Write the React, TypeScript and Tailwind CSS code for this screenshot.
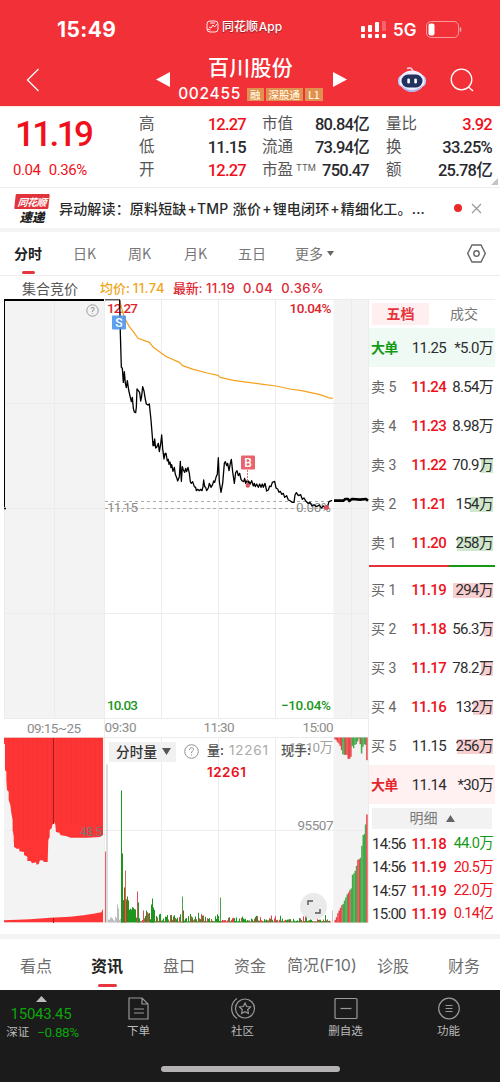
import clsx from 'clsx'
import type { ReactNode } from 'react'

type Point = [number, number]
type Bar = [x: number, height: number, color: string]
type OrderRow = { label: string; price: string; volume: string; bar: number; up?: boolean; big?: boolean }

const GREEN = '#1c961c'

const NUM = "font-[Roboto,'Noto_Sans_CJK_SC',sans-serif]"

const quoteRows = [
  ['高', '12.27', '市值', '80.84亿', '量比', '3.92'],
  ['低', '11.15', '流通', '73.94亿', '换', '33.25%'],
  ['开', '12.27', '市盈', '750.47', '额', '25.78亿'],
]

const sells: OrderRow[] = [
  { label: '大单', price: '11.25', volume: '*5.0万', bar: 0, big: true },
  { label: '卖 5', price: '11.24', volume: '8.54万', bar: 0, up: true },
  { label: '卖 4', price: '11.23', volume: '8.98万', bar: 0, up: true },
  { label: '卖 3', price: '11.22', volume: '70.9万', bar: 12, up: true },
  { label: '卖 2', price: '11.21', volume: '154万', bar: 23, up: true },
  { label: '卖 1', price: '11.20', volume: '258万', bar: 36, up: true },
]

const buys: OrderRow[] = [
  { label: '买 1', price: '11.19', volume: '294万', bar: 40, up: true },
  { label: '买 2', price: '11.18', volume: '56.3万', bar: 9, up: true },
  { label: '买 3', price: '11.17', volume: '78.2万', bar: 12, up: true },
  { label: '买 4', price: '11.16', volume: '132万', bar: 20, up: true },
  { label: '买 5', price: '11.15', volume: '256万', bar: 36 },
  { label: '大单', price: '11.14', volume: '*30万', bar: 0, big: true },
]

const trades = [
  { time: '14:56', price: '11.18', volume: '44.0万', down: true },
  { time: '14:56', price: '11.19', volume: '20.5万' },
  { time: '14:57', price: '11.19', volume: '22.0万' },
  { time: '15:00', price: '11.19', volume: '0.14亿' },
]

// Series are stored in @3x units
const morning: Point[] = [
  [359, 30], [361, 130], [364, 232], [367, 235], [370, 277], [373, 245], [376, 280], [379, 293], [382, 272], [386, 300],
  [390, 318], [394, 335], [397, 322], [400, 355], [403, 366], [407, 368], [409, 352], [411, 297], [415, 302], [419, 308],
  [422, 333], [425, 318], [428, 290], [432, 303], [436, 328], [439, 342], [444, 345], [448, 342], [453, 390], [457, 440],
  [459, 467], [461, 455], [462, 467], [464, 447], [467, 474], [470, 472], [475, 460], [478, 485], [482, 462], [485, 435],
  [488, 476], [492, 507], [495, 490], [498, 490], [502, 513], [505, 508], [507, 523], [510, 516], [513, 533], [515, 524],
  [519, 544], [523, 532], [526, 553], [530, 563], [533, 573], [538, 560], [541, 514], [544, 574], [547, 530], [550, 540],
  [554, 547], [557, 535], [560, 545], [564, 532], [568, 550], [571, 575], [574, 580], [578, 575], [583, 590], [587, 592],
  [589, 602], [593, 598], [598, 602], [602, 598], [606, 602], [609, 590], [611, 570], [614, 590], [617, 592], [620, 602],
  [625, 594], [628, 580], [633, 592], [638, 583], [641, 573], [644, 577], [648, 562], [652, 553], [655, 503], [658, 575],
  [663, 607], [668, 580], [673, 520], [676, 515], [680, 527], [683, 520], [687, 542], [691, 520], [694, 508], [698, 545],
  [703, 580], [707, 548], [711, 542], [715, 557], [719, 550], [723, 568], [727, 573], [731, 575], [734, 565], [737, 580],
  [740, 573], [744, 580],
]
const afternoon: Point[] = [
  [746, 573], [750, 583], [755, 572], [760, 588], [763, 580], [766, 590], [770, 582], [775, 592], [779, 582], [783, 592],
  [787, 582], [790, 592], [795, 580], [800, 603], [805, 600], [809, 588], [813, 590], [817, 577], [824, 574], [828, 594],
  [833, 597], [837, 607], [841, 604], [845, 613], [850, 610], [854, 622], [860, 617], [865, 630], [870, 632], [876, 637],
  [882, 637], [885, 615], [889, 608], [895, 617], [902, 614], [907, 628], [912, 624], [918, 634], [924, 640], [930, 637],
  [936, 648], [942, 644], [950, 650], [958, 645], [964, 654], [970, 648], [976, 654], [982, 652], [987, 635], [996, 631],
]
const closing: Point[] = [[1002, 632], [1030, 632], [1036, 627], [1044, 627], [1048, 633], [1056, 627], [1080, 629], [1098, 627], [1104, 632]]
const average: Point[] = [
  [359, 30], [365, 55], [374, 85], [388, 110], [400, 125], [414, 145], [448, 157], [460, 172], [497, 199], [538, 217],
  [548, 227], [580, 238], [622, 249], [654, 256], [661, 262], [700, 271], [745, 277], [790, 283], [828, 288], [870, 297],
  [905, 302], [960, 314], [985, 323], [998, 325],
]

const auctionTop: Point[] = [
  [12, 143], [12, 162], [15, 162], [15, 240], [19, 245], [19, 270], [21, 300], [26, 305], [26, 330], [31, 345], [34, 370],
  [38, 390], [38, 420], [42, 440], [42, 470], [50, 476], [58, 476], [58, 484], [72, 486], [72, 495], [82, 500], [82, 513],
  [92, 513], [96, 520], [108, 517], [110, 524], [116, 522], [120, 511], [128, 511], [132, 516], [143, 516], [145, 450],
  [149, 440], [149, 420], [155, 415], [157, 405], [162, 396], [166, 404], [168, 426], [178, 428], [182, 436], [198, 438],
  [212, 443], [262, 443], [300, 441], [309, 435], [309, 143],
]
const auctionBottom: Point[] = [
  [12, 697], [12, 691], [90, 688], [150, 683], [210, 680], [250, 676], [280, 671], [304, 667], [309, 657], [309, 697],
]

const toPoints = (points: Point[], top: number) => points.map(([x, y]) => `${x / 3},${top + y / 3}`).join(' ')

const spikes: Bar[] = [
  [106.5, 158, '#b9b9b9'], [105, 71, '#e8606a'], [121, 132, GREEN], [122, 69, GREEN], [124, 35, '#8a5a1c'],
  [125, 52, '#cf6a5a'], [137, 31, '#d8505a'], [138, 20, GREEN], [143, 12, '#d8505a'], [152, 24, GREEN],
  [151, 18, GREEN], [153, 15, GREEN], [182, 26, '#4aa24a'], [183, 12, '#a04a30'], [220, 25, '#4aa24a'],
  [117, 18, '#b9b9b9'], [118, 14, '#b9b9b9'], [332, 12, '#c8c8c8'],
]

const noise = (i: number) => {
  const value = Math.sin(i * 12.9898 + 4.1) * 43758.5453
  return value - Math.floor(value)
}

const intraday: Bar[] = Array.from({ length: 223 }, (_, i) => {
  const x = 108 + i
  if (x < 121) return [x, 1 + noise(i) * 5, '#bdbdbd']
  const limit = x < 129 ? 27 : x < 137 ? 19 : x < 200 ? 11 : x < 310 ? 7 : 9
  const floor = x < 129 ? 22 : x < 136 ? 12 : 1
  const color = x < 136 ? (x < 128 ? '#5d7020' : GREEN) : noise(i + 900) > 0.6 ? '#d8434b' : GREEN
  return [x, floor + noise(i) * noise(i + 300) * (limit - floor + 3), color]
})

const R = '#e9454b'
const G = '#45a849'
const hanging: Bar[] = [
  [464, 5, R], [468, 8, R], [472, 14, R], [476, 18, R], [480, 25, R], [484, 38, R], [488, 50, G], [492, 52, G],
  [496, 52, R], [500, 52, R], [504, 64, R], [508, 64, R], [512, 58, R], [516, 25, G], [520, 32, G], [524, 22, G],
  [528, 20, G], [532, 12, G], [536, 4, G], [540, 20, R], [544, 48, G], [548, 28, G], [552, 20, G], [556, 22, G],
  [560, 68, R],
]
const rising: Bar[] = [
  [465, 8, R], [469, 16, R], [473, 28, R], [477, 36, R], [481, 44, R], [485, 52, R], [489, 56, G], [493, 66, G],
  [497, 75, G], [501, 84, G], [505, 90, R], [509, 97, R], [513, 102, G], [517, 143, G], [521, 147, G], [525, 155, G],
  [529, 170, G], [533, 188, R], [537, 190, R], [541, 194, G], [545, 230, G], [549, 262, G], [553, 266, G], [556, 294, G],
  [560, 324, R],
]

function StatusBar() {
  return (
    <div className="flex h-[50px] items-start text-white">
      <span className="ml-[57px] mt-[16px] w-[149px] font-[Inter,sans-serif] text-[21px] font-bold leading-[28px] tracking-[0.4px]">15:49</span>
      <div className="mt-[17px] flex w-[154px] items-center gap-[3px] text-[12px] font-medium leading-[18px] [text-shadow:0_1px_1px_#8b1a20]">
        <svg width="13" height="13" viewBox="0 0 13 13" fill="none" stroke="#fff" strokeWidth="0.9">
          <rect x="1" y="1" width="11" height="11" rx="3" />
          <path d="M3 7l2 1 2-3 1.500 2L11 4M1.500 9l3 1M4 3h5" />
        </svg>
        <span>
          同花顺 <span className="-ml-[2px] font-[Inter]">App</span>
        </span>
      </div>
      <svg className="mt-[21px]" width="28" height="18" fill="#fff">
        <rect x="1" y="5" width="4" height="6" rx="1" />
        <rect x="8" y="4" width="4" height="7" rx="1" />
        <rect x="15" y="1" width="4" height="10" rx="1" />
        <rect x="22" y="0" width="4" height="10" rx="1" opacity=".25" />
        {[1, 8, 15, 22].map((x) => (
          <rect key={x} x={x} y="13" width="4" height="4" rx="1" />
        ))}
      </svg>
      <span className="ml-[5px] mt-[20px] w-[33px] font-[Inter] text-[17px] font-semibold leading-[21px]">5G</span>
      <svg className="mt-[21px]" width="36" height="18" fill="none">
        <rect x="0.500" y="0.500" width="32" height="16" rx="4.500" stroke="#fff" strokeOpacity=".5" />
        <rect x="2.500" y="2.500" width="6" height="12" rx="2" fill="#fff" />
        <path d="M34.500 6.500v4" stroke="#fff" strokeOpacity=".6" strokeWidth="1.500" />
      </svg>
    </div>
  )
}

function Robot() {
  return (
    <svg width="30" height="28" viewBox="0 0 30 28">
      <path d="M10 2.500q5-2 6 3" fill="none" stroke="#f3d6e4" strokeWidth="1.500" />
      <rect x="1" y="9" width="28" height="12" rx="5" fill="#b9c7f5" />
      <ellipse cx="15" cy="15" rx="12.500" ry="10.500" fill="#eef0ff" />
      <path d="M4 19q11 10 22 0-3 7-11 7T4 19" fill="#aeb8ef" />
      <rect x="4.500" y="8.500" width="21" height="13" rx="6.500" fill="#23315e" />
      <rect x="10.300" y="12.500" width="2.600" height="5" rx="1.200" fill="#fff" />
      <rect x="17.300" y="12.500" width="2.600" height="5" rx="1.200" fill="#fff" />
    </svg>
  )
}

function Tag({ children }: { children: ReactNode }) {
  return <span className="flex h-[13px] items-center bg-[#e0914f] px-[3px] text-[10.5px] font-medium leading-[13px] text-[#fff3df]">{children}</span>
}

function TitleBar() {
  return (
    <div className="flex h-[56px] items-start text-white">
      <svg className="ml-[26px] mt-[18px]" width="14" height="24" fill="none" stroke="#fff" strokeWidth="1.300">
        <path d="M12.500 1L1.500 12l11 11" />
      </svg>
      <svg className="ml-[116px] mt-[22px]" width="14" height="15" fill="#fff">
        <path d="M14 0v15L0 7.500z" />
      </svg>
      <div className="ml-[5px] flex w-[151px] flex-col items-center">
        <span className="mt-[3px] text-[21px] font-medium leading-[26px] tracking-[0.3px]">百川股份</span>
        <div className="mt-[6px] flex items-center gap-[2px]">
          <span className="mr-[4px] font-[Inter] text-[15.5px] font-medium leading-[18px] tracking-[0.7px]">002455</span>
          <Tag>融</Tag>
          <Tag>深股通</Tag>
          <Tag>L1</Tag>
        </div>
      </div>
      <svg className="ml-[7px] mt-[22px]" width="14" height="15" fill="#fff">
        <path d="M0 0v15l14-7.500z" />
      </svg>
      <span className="ml-[50px] mt-[16px]">
        <Robot />
      </span>
      <svg className="ml-[23px] mt-[18px]" width="25" height="25" fill="none" stroke="#fff" strokeWidth="1.300">
        <circle cx="11.500" cy="11.500" r="10.300" />
        <path d="M18.500 19l4.500 4" />
      </svg>
    </div>
  )
}

function QuotePanel() {
  return (
    <div className={clsx('relative flex h-[82px] border-b border-[#eee] border-t border-t-[#fbe9dc]', NUM)}>
      <div className="w-[139px] shrink-0 text-[#f0101b]">
        <div className="mt-[11px] pl-[15px] text-[35px] font-medium leading-[34px] tracking-[-2.6px]">11.19</div>
        <div className="mt-[9px] flex gap-[8px] pl-[13px] text-[15px] leading-[18px] tracking-[-0.4px]">
          <span>0.04</span>
          <span>0.36%</span>
        </div>
      </div>
      <div className="mt-[6px] flex flex-col">
        {quoteRows.map((row, i) => (
          <div
            key={row[0]}
            className="flex h-[23px] items-center whitespace-nowrap text-[16.5px] font-medium leading-[23px] tracking-[-0.75px] text-[#28292e]"
          >
            <span className="w-[40px] text-[15.5px] font-normal text-[#555]">{row[0]}</span>
            <span className={clsx('w-[67px] text-right', i !== 1 && 'text-[#f0101b]')}>{row[1]}</span>
            <span className="ml-[16px] flex w-[107px] justify-between">
              <span className="flex text-[15.5px] font-normal tracking-normal text-[#555]">
                {row[2]}
                {i === 2 && <span className="ml-[3px] font-[Inter] text-[9px] leading-[17px] tracking-[0.1px]">TTM</span>}
              </span>
              <span>{row[3]}</span>
            </span>
            <span className="ml-[17px] w-[40px] text-[15.5px] font-normal tracking-normal text-[#555]">{row[4]}</span>
            <span className={clsx('w-[66px] text-right', i === 0 && 'text-[#f0101b]')}>{row[5]}</span>
          </div>
        ))}
      </div>
      <svg className="absolute bottom-[2px] right-[2px]" width="7" height="7" fill="#c4c4c4">
        <path d="M7 0v7H0z" />
      </svg>
    </div>
  )
}

function NewsBar() {
  return (
    <div className="flex h-[40px] items-center">
      <div className="ml-[14px] flex w-[36px] flex-col items-center font-bold italic leading-none">
        <span className="flex h-[15px] w-[34px] -skew-x-6 items-center justify-center rounded-[1px] bg-[#e2323b] text-[10px] tracking-[-0.5px] text-white">同花顺</span>
        <span className="mt-[1px] text-[12.5px] font-black leading-[13px] text-[#222]">速递</span>
      </div>
      <span className="ml-[9px] w-[368px] whitespace-nowrap text-[14px] font-medium leading-[20px] tracking-[0.17px] text-[#2a2a2a]">
        异动解读：原料短缺<span className="mx-px font-[Inter]">+TMP</span> 涨价<span className="mx-px font-[Inter]">+</span>锂电闭环<span className="mx-px font-[Inter]">+</span>精细化工。
        <span className="font-[Inter]">...</span>
      </span>
      <span className="ml-[27px] size-[8px] rounded-full bg-[#ea2a2a]" />
      <svg className="ml-[9px]" width="11" height="11" stroke="#999" strokeWidth="1.200">
        <path d="M1 1l9 9M10 1l-9 9" />
      </svg>
    </div>
  )
}

function PeriodTabs() {
  return (
    <div className="flex h-[48px] items-center border-b border-[#eee] border-t-[4px] border-t-[#f4f4f4] text-[14px] text-[#777]">
      <span className="relative ml-[14px] w-[59px] font-bold text-[#222]">
        分时
        <i className="absolute -bottom-[10px] left-[8px] h-[3px] w-[13px] rounded-full bg-[#e6363e]" />
      </span>
      <span className="w-[55px]">日K</span>
      <span className="w-[56px]">周K</span>
      <span className="w-[54px]">月K</span>
      <span className="w-[57px]">五日</span>
      <span className="flex items-center gap-[4px]">
        更多
        <svg width="7" height="5" fill="#666">
          <path d="M0 0h7L3.500 5z" />
        </svg>
      </span>
      <svg className="ml-auto mr-[14px]" width="19" height="19" fill="none" stroke="#666" strokeWidth="1.400">
        <path d="M5 1h9l4.300 8.500L14 18H5L.7 9.500z" />
        <circle cx="9.500" cy="9.500" r="2.700" />
      </svg>
    </div>
  )
}

function Bars({ bars, base, width = 1 }: { bars: Bar[]; base: number; width?: number }) {
  return (
    <>
      {bars.map(([x, h, color], i) => (
        <rect key={i} x={x} y={base - h} width={width} height={h} fill={color} />
      ))}
    </>
  )
}

function Chart() {
  return (
    <svg width="369" height="625" viewBox="0 299 369 625" className={NUM}>
      <rect x="4" y="299" width="100.500" height="419" fill="#f3f3f3" />
      <rect x="333.500" y="299" width="35" height="419" fill="#f3f3f3" />
      <rect x="4" y="737" width="100.500" height="186" fill="#f3f3f3" />
      <rect x="333.500" y="737" width="35" height="186" fill="#f3f3f3" />
      <g stroke="#ececec">
        <path d="M4 299.500h364M4 403.500h364M4 508.500h364M4 613.500h364M4 718.500h364M4 737.500h364M4 830.500h364" />
        <path d="M54.500 299v419M104.500 299v624M161.500 299v419M218.500 299v419M275.500 299v419M161.500 737v186M218.500 737v186M275.500 737v186M351.500 299v419M4.500 508v210M368.500 299v624" />
      </g>
      <path d="M105 501.500h228M105 508.500h228" stroke="#aaa" strokeDasharray="3 3" />

      <g fontSize="13.500" fill="#8c8c8c">
        <text x="107" y="511.500" textLength="31">11.15</text>
        <text x="296" y="511.500" textLength="35">0.00%</text>
        <text x="27" y="733" textLength="54">09:15~25</text>
        <text x="104.500" y="732" textLength="32">09:30</text>
        <text x="203.500" y="732" textLength="31">11:30</text>
        <text x="302.500" y="732" textLength="31">15:00</text>
        <text x="297.500" y="830" textLength="36">95507</text>
        <text x="289" y="752" textLength="44" opacity=".8">19.10万</text>
      </g>
      <g fontSize="13.500" fontWeight="500">
        <text x="107" y="312.500" textLength="31" fill="#e0242e">12.27</text>
        <text x="289.500" y="312.500" textLength="42" fill="#e0242e">10.04%</text>
        <text x="107" y="709.500" textLength="31" fill={GREEN}>10.03</text>
        <text x="281" y="709.500" textLength="50" fill={GREEN}>−10.04%</text>
      </g>

      <polyline points={toPoints(average, 290)} fill="none" stroke="#f5a11e" strokeWidth="1.200" />
      <path d="M4.500 507V300" stroke="#000" />
      <path d="M4 300h100" stroke="#000" strokeWidth="2" />
      <circle cx="5" cy="508.500" r="1" />
      <path d="M105 299.800h15" stroke="#333" strokeWidth="1.200" />
      <polyline points={toPoints([...morning, ...afternoon], 290)} fill="none" stroke="#000" strokeWidth="1.300" strokeLinejoin="round" />
      <polyline points={toPoints(closing, 290)} fill="none" stroke="#000" strokeWidth="2.600" strokeLinejoin="round" />
      <circle cx="326.500" cy="507.500" r="2.500" fill="#dd4b57" />

      <rect x="112" y="315.500" width="14" height="14" rx="1" fill="#4d96ec" fillOpacity=".9" />
      <text x="119" y="327" textAnchor="middle" fontSize="12" fontWeight="500" fill="#fff">S</text>
      <rect x="241" y="455.500" width="14" height="14" rx="1" fill="#e9636c" />
      <text x="248" y="467" textAnchor="middle" fontSize="12" fontWeight="500" fill="#fff">B</text>
      <path d="M247.500 470v13" stroke="#e9636c" strokeDasharray="2 1" />
      <circle cx="247.800" cy="485.500" r="2.200" fill="#e0525c" />
      <circle cx="92.500" cy="310.500" r="5.700" fill="none" stroke="#999" />
      <text x="92.500" y="314" textAnchor="middle" fontSize="9.500" fill="#888">?</text>

      <polygon points={toPoints(auctionTop, 690)} fill="#ff3535" />
      <polygon points={toPoints(auctionBottom, 690)} fill="#ff3535" />
      <g stroke="#df2a2a" strokeOpacity=".4" strokeWidth=".7">
        {Array.from({ length: 20 }, (_, i) => (
          <path key={i} d={`M${8.5 + i * 4.8} 738v${i < 1 ? 45 : i < 9 ? 104 : 86}`} />
        ))}
      </g>
      <path d="M53.500 738v86M53.500 918v5" stroke="#a11d1d" />
      <text x="80" y="836" fontSize="12" fill="#777" textLength="22">48.5</text>

      <Bars bars={intraday} base={922.5} />
      <Bars bars={spikes} base={922.5} />
      {hanging.map(([x, h, color]) => (
        <rect key={x} x={180 + x / 3 - 0.5} y="737.500" width="1.500" height={h / 3} fill={color} />
      ))}
      <Bars bars={rising.map(([x, h, color]) => [180 + x / 3 - 0.5, h / 3, color])} base={922.5} width={1.5} />
    </svg>
  )
}

function ChartArea() {
  return (
    <div className="relative h-[635px] w-[369px] shrink-0">
      <Chart />
      <div className="absolute left-[109px] top-[443px] flex h-[20px] w-[67px] items-center gap-[5px] bg-[#f1f1f1] pb-px pl-[7px] text-[13.5px] font-medium tracking-[0.3px] text-[#333]">
        分时量
        <svg width="9" height="7" fill="#555">
          <path d="M0 0h9L4.500 7z" />
        </svg>
      </div>
      <svg className="absolute left-[184px] top-[445px]" width="15" height="15" fill="none" stroke="#909090">
        <circle cx="7.500" cy="7.500" r="6.800" />
        <path d="M5.500 6c0-3 4-3 4-.5 0 1.500-2 1.500-2 3.500M7.500 10.500v1" />
      </svg>
      <div className="absolute left-[207px] top-[441px] flex text-[13px] leading-[20px] text-[#555]">
        <span className="w-[22px] font-medium">量:</span>
        <span className="w-[52px] font-[Inter] text-[13.5px] tracking-[0.8px] text-[#aaa]">12261</span>
        <span className="font-medium">现手:</span>
      </div>
      <span className="absolute left-[207px] top-[463px] font-[Inter] text-[13.5px] font-semibold leading-[20px] tracking-[0.5px] text-[#e8111c]">12261</span>
      <span className="absolute left-[300px] top-[594px] flex size-[27px] items-center justify-center rounded-full bg-[#dedede]/65">
        <svg width="14" height="14" fill="none" stroke="#555" strokeWidth="1.400">
          <path d="M1 5V1h5M13 9v4H8" />
        </svg>
      </span>
    </div>
  )
}

function Orders({ rows, side }: { rows: OrderRow[]; side: 'sell' | 'buy' }) {
  return rows.map((row) => (
    <div
      key={row.label}
      className={clsx(
        'flex h-[39px] items-center pl-[2px] pr-[2px] pt-px text-[15px] tracking-[-0.7px] text-[#2d2d2d]',
        row.big && (side === 'sell' ? 'bg-[#f0faf5]' : 'bg-[#fff0f2]'),
      )}
    >
      <span
        className={clsx(
          'w-[34px] text-[14px]',
          !row.big && 'tracking-normal text-[#666]',
          row.big && 'font-bold',
          row.big && (side === 'sell' ? 'text-[#169a16]' : 'text-[#e3262e]'),
        )}
      >
        {row.label}
      </span>
      <span className={clsx('w-[41px] text-right', row.up && 'font-medium text-[#ee111c]')}>{row.price}</span>
      <span className="relative ml-auto leading-[17px]">
        <i
          className={clsx('absolute right-0 top-[1px] h-[15px]', side === 'sell' ? 'bg-[#cfe8cd]' : 'bg-[#f8cfd1]')}
          style={{ width: row.bar }}
        />
        <span className="relative">{row.volume}</span>
      </span>
    </div>
  ))
}

function OrderBook() {
  return (
    <div className={clsx('flex w-[126px] flex-col border-t border-[#eee]', NUM)}>
      <div className="flex h-[28px] items-center pl-[3px] text-[14px]">
        <span className="flex h-[22px] w-[57px] items-center justify-center rounded-[2px] bg-[#ffeff0] font-bold text-[#e6343b]">五档</span>
        <span className="ml-[21px] text-[#777]">成交</span>
      </div>
      <Orders rows={sells} side="sell" />
      <div className="mb-[3px] mt-[3px] flex h-[2px]">
        <span className="w-[80px] bg-[#e6303a]" />
        <span className="grow bg-[#159a15]" />
      </div>
      <Orders rows={buys} side="buy" />
      <div className="mx-[3px] mt-[4px] flex h-[21px] items-center justify-center gap-[8px] bg-[#f2f2f2] text-[14px] text-[#777]">
        明细
        <svg width="9" height="7" fill="#666">
          <path d="M0 7h9L4.500 0z" />
        </svg>
      </div>
      <div className="mt-[3px] flex flex-col">
        {trades.map((trade, i) => (
          <div key={i} className="flex h-[23.3px] items-center pl-[3px] pr-[2px] pt-px text-[15px] tracking-[-0.7px]">
            <span className="w-[33px] whitespace-nowrap text-[#2d2d2d]">{trade.time}</span>
            <span className="w-[41px] text-right font-medium text-[#ee111c]">{trade.price}</span>
            <span className={clsx('ml-auto text-[14.5px]', trade.down ? 'text-[#159a15]' : 'text-[#ee111c]')}>{trade.volume}</span>
          </div>
        ))}
      </div>
    </div>
  )
}

function InfoTabs() {
  return (
    <div className="flex h-[56px] items-center border-t-[5px] border-[#f3f3f3] text-[16px] text-[#6d6d6d]">
      <span className="ml-[20px] w-[71px]">看点</span>
      <span className="relative w-[72px] font-bold text-[#222]">
        资讯
        <i className="absolute -bottom-[10px] left-[7px] h-[3px] w-[19px] rounded-full bg-[#e6363e]" />
      </span>
      <span className="w-[71px]">盘口</span>
      <span className="w-[53px]">资金</span>
      <span className="w-[90px]">
        简况<span className="font-[Inter]">(F10)</span>
      </span>
      <span className="w-[71px]">诊股</span>
      <span>财务</span>
    </div>
  )
}

function Action({ label, children }: { label: string; children: ReactNode }) {
  return (
    <div className="flex w-[103px] flex-col items-center">
      <svg className="mt-[7px]" width="26" height="24" fill="none" stroke="#999" strokeWidth="1.200">
        {children}
      </svg>
      <span className="mt-[1px] text-[11.5px] leading-[16px] text-[#bbb]">{label}</span>
    </div>
  )
}

function BottomBar() {
  return (
    <div className="flex h-[92px] flex-col items-center bg-[#1b1b1b]">
      <div className="flex h-[76px] w-full">
        <div className={clsx('flex w-[87px] shrink-0 flex-col items-center pr-[5px] text-[#0ca50c]', NUM)}>
          <svg className="mt-[6px]" width="11" height="6" fill="#bbb">
            <path d="M0 6h11L5.500 0z" />
          </svg>
          <span className="mt-[4px] text-[15px] leading-[16px] tracking-[-0.25px]">15043.45</span>
          <span className="mt-[2px] flex gap-[8px] pl-[3px] text-[13.5px] leading-[16px] tracking-[-0.4px]">
            <span className="text-[11.5px] tracking-normal text-[#bbb]">深证</span>−0.88%
          </span>
        </div>
        <Action label="下单">
          <path d="M3 1h13l6 6v15H3zM16 1v6h6M8 12h10M8 16h10" />
        </Action>
        <div className="w-px" />
        <Action label="社区">
          <path d="M7 1.500a12 12 0 0 0 0 20" />
          <circle cx="15" cy="11.500" r="9.500" />
          <path d="M15 6l1.700 3.500 3.800.5-2.800 2.700.7 3.800-3.400-1.800-3.400 1.800.7-3.800L9.500 10l3.800-.5z" />
        </Action>
        <Action label="删自选">
          <rect x="2" y="1.500" width="22" height="20" rx="1" />
          <path d="M7.500 11.500h11" />
        </Action>
        <Action label="功能">
          <circle cx="13" cy="11.500" r="10.300" />
          <path d="M9.500 8.500h7M9.500 11.500h7M9.500 14.500h7" />
        </Action>
      </div>
      <div className="h-[6px] w-[179px] rounded-full bg-[#b4b2b3]" />
    </div>
  )
}

export default function App() {
  return (
    <div className="h-[1082px] w-[500px] overflow-hidden bg-white font-['Noto_Sans_CJK_SC',sans-serif]">
      <header className="bg-[#f23038]">
        <StatusBar />
        <TitleBar />
      </header>
      <QuotePanel />
      <NewsBar />
      <PeriodTabs />
      <div className="flex h-[23px] items-center whitespace-nowrap text-[13px] leading-[20px]">
        <span className="ml-[22px] w-[78px] text-[14px] text-[#555]">集合竞价</span>
        <span className="w-[73px] font-medium text-[#efa61a]">
          均价: <span className="font-[Inter] tracking-[0.5px]">11.74</span>
        </span>
        <span className="flex gap-[8px] font-[Inter,'Noto_Sans_CJK_SC'] text-[13px] font-medium tracking-[0.4px] text-[#dc2a35]">
          <span>
            <span className="tracking-[-0.3px]">最新:</span> 11.19
          </span>
          <span>0.04</span>
          <span>0.36%</span>
        </span>
      </div>
      <div className="flex">
        <ChartArea />
        <OrderBook />
      </div>
      <InfoTabs />
      <BottomBar />
    </div>
  )
}
